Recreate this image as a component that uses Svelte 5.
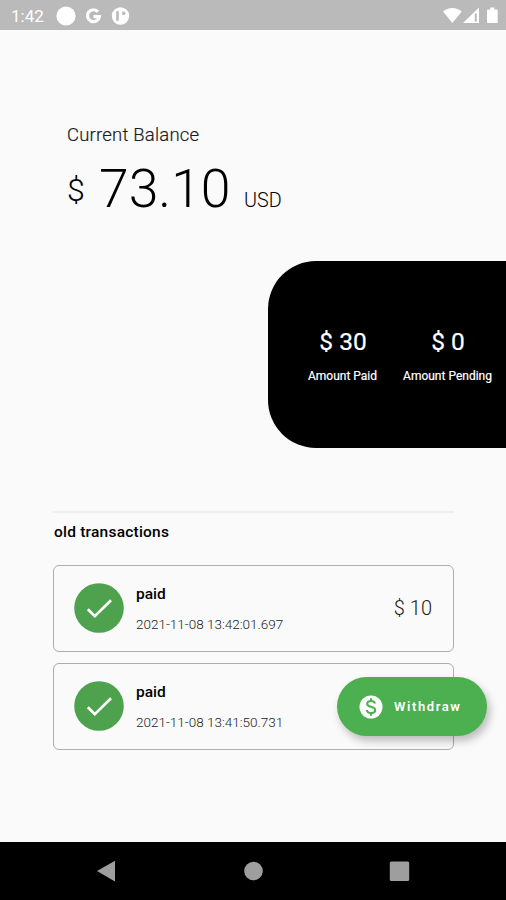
<script lang="ts">
    type Transaction = { status: string; date: string; amount: string };

    const balance = "73.10";

    const totals = [
        { value: "$ 30", label: "Amount Paid" },
        { value: "$ 0", label: "Amount Pending" },
    ];

    const transactions: Transaction[] = [
        { status: "paid", date: "2021-11-08 13:42:01.697", amount: "$ 10" },
        { status: "paid", date: "2021-11-08 13:41:50.731", amount: "" },
    ];
</script>

<div class="screen">
    <header class="status">
        <span class="clock">1:42</span>
        <svg class="notifications" width="76" height="20" viewBox="0 0 76 20">
            <circle cx="10" cy="10" r="9.6" fill="#fff" />
            <path d="M42 5.800A6 6 0 1 0 43.400 10.600H37.500" fill="none" stroke="#fff" stroke-width="3.200" />
            <circle cx="64.500" cy="10" r="8.700" fill="#fff" />
            <path d="M60.200 5.200h2.600v9.600h-2.600zM66.200 5.400h1.600a1.700 1.700 0 0 1 0 3.600h-1.600z" fill="#bababa" />
        </svg>
        <svg class="signals" width="56" height="18" viewBox="0 0 56 18">
            <path d="M0 4.600C5-.3 13.800-.3 18.800 4.600L9.400 16z" fill="#fff" />
            <path d="M20 16L36 .4V16z" fill="#fff" />
            <path d="M31.800 6.500h2v8h-2z" fill="#bababa" />
            <path d="M47.300.5h4v1.900h2.200q1.200 0 1.200 1.200v11.300q0 1.200-1.200 1.200h-8.300q-1.200 0-1.200-1.200V3.600q0-1.200 1.200-1.200h2.100z" fill="#fff" />
        </svg>
    </header>

    <main>
        <section class="balance">
            <p class="title">Current Balance</p>
            <div class="sum">
                <span class="sign">$</span>
                <span class="number">{balance}</span>
                <span class="currency">USD</span>
            </div>
        </section>

        <section class="totals">
            {#each totals as total (total.label)}
                <div class="total">
                    <strong>{total.value}</strong>
                    <span>{total.label}</span>
                </div>
            {/each}
        </section>

        <section class="history">
            <h2>old transactions</h2>
            {#each transactions as item (item.date)}
                <article class="card">
                    <svg class="check" width="50" height="50" viewBox="0 0 50 50">
                        <circle cx="25" cy="25" r="24.800" fill="#4ea24e" />
                        <path d="M13.800 26.200l7 7L37 17.200" fill="none" stroke="#fff" stroke-width="2.700" />
                    </svg>
                    <div class="info">
                        <h3>{item.status}</h3>
                        <p>{item.date}</p>
                    </div>
                    <span class="amount">{item.amount}</span>
                </article>
            {/each}
        </section>
    </main>

    <button class="withdraw">
        <svg width="24" height="24" viewBox="0 0 24 24">
            <circle cx="12" cy="12" r="11.500" fill="#fff" />
            <path d="M16 8.600C15.600 6.900 14.100 6 12.100 6C9.800 6 8.200 7.100 8.200 8.900C8.200 12.800 16.200 10.900 16.200 15.100C16.200 17 14.500 18.100 12.200 18.100C9.700 18.100 8.100 17 7.900 15M12.100 3.300V6M12.100 18V20.700" fill="none" stroke="#4caf50" stroke-width="2.100" />
        </svg>
        <span>Withdraw</span>
    </button>

    <nav>
        <svg width="22" height="22" viewBox="0 0 22 22"><path d="M1 11L19 .8V21.400z" /></svg>
        <svg width="22" height="22" viewBox="0 0 22 22"><circle cx="11.500" cy="11" r="9.300" /></svg>
        <svg width="22" height="22" viewBox="0 0 22 22"><rect x="1.800" y="1.500" width="19.400" height="19.400" rx="1.500" /></svg>
    </nav>
</div>

<style>
    :global(body) {
        margin: 0;
        background: #fafafa;
    }

    .screen {
        position: relative;
        display: flex;
        flex-direction: column;
        width: 506px;
        height: 900px;
        overflow: hidden;
        background: #fafafa;
        color: #000;
        font-family: Roboto, "Liberation Sans", sans-serif;
        white-space: nowrap;
    }

    h2, h3, p {
        margin: 0;
    }

    .status {
        display: flex;
        align-items: center;
        box-sizing: border-box;
        height: 30px;
        padding: 1px 7px 0 11px;
        background: #bababa;
    }

    .clock {
        width: 45px;
        font-size: 17px;
        line-height: 20px;
        color: #fff;
    }

    .signals {
        margin-left: auto;
    }

    main {
        display: flex;
        flex: 1;
        flex-direction: column;
    }

    .balance {
        height: 137px;
        padding: 94px 0 0 67px;
    }

    .title {
        color: #1c1c1c;
        font-size: 18.5px;
        font-weight: 300;
        line-height: 22px;
        letter-spacing: 0.2px;
        -webkit-text-stroke: 0.2px;
    }

    .sum {
        display: flex;
        align-items: baseline;
        margin-top: 11px;
        font-weight: 300;
        line-height: 64px;
    }

    .sign {
        position: relative;
        top: -6px;
        width: 32px;
        font-size: 32px;
    }

    .number {
        width: 145px;
        font-size: 53.5px;
        font-weight: 300;
    }

    .currency {
        font-size: 19.8px;
    }

    .totals {
        display: flex;
        align-items: center;
        align-self: flex-end;
        gap: 26px;
        box-sizing: border-box;
        width: 238px;
        height: 187px;
        padding-left: 40px;
        border-radius: 48px 0 0 48px;
        background: #000;
        color: #fff;
    }

    .total {
        display: flex;
        flex-direction: column;
        align-items: center;
    }

    .total strong {
        padding: 1px 0 0 1px;
        font-size: 24.5px;
        font-weight: 400;
        line-height: 30px;
        -webkit-text-stroke: 0.2px;
    }

    .total span {
        margin-top: 11px;
        font-size: 12px;
        font-weight: 400;
        line-height: 16px;
        -webkit-text-stroke: 0.2px;
    }

    .history {
        margin: 63px 52px 0 53px;
        border-top: 2px solid #f0f0f0;
    }

    h2 {
        padding: 9px 0 23px 1px;
        font-size: 15.5px;
        font-weight: 500;
        line-height: 20px;
        letter-spacing: 0.22px;
    }

    .card {
        display: flex;
        align-items: center;
        box-sizing: border-box;
        height: 87px;
        margin-bottom: 11px;
        padding: 0 21px 1px 20px;
        border: 1px solid #adadad;
        border-radius: 6px;
    }

    .info {
        padding-top: 1px;
        margin-left: 12px;
    }

    .info h3 {
        font-size: 15.5px;
        font-weight: 500;
        line-height: 20px;
    }

    .info p {
        margin-top: 10px;
        color: #1c1c1c;
        font-size: 13.5px;
        font-weight: 300;
        line-height: 20px;
    }

    .amount {
        margin-left: auto;
        color: #1c1c1c;
        font-size: 20px;
        font-weight: 300;
    }

    .withdraw {
        position: absolute;
        top: 677px;
        left: 337px;
        display: flex;
        align-items: center;
        gap: 11px;
        width: 150px;
        height: 59px;
        padding: 0 0 0 22px;
        border: 0;
        border-radius: 30px;
        background: #4caf50;
        box-shadow: 3px 5px 8px rgba(0, 0, 0, 0.25);
        color: #fff;
        font: 600 13px Roboto, "Liberation Sans", sans-serif;
        letter-spacing: 1.6px;
    }

    nav {
        display: flex;
        align-items: center;
        gap: 124px;
        box-sizing: border-box;
        height: 58px;
        padding-left: 96px;
        background: #000;
        fill: #9e9e9e;
    }
</style>
